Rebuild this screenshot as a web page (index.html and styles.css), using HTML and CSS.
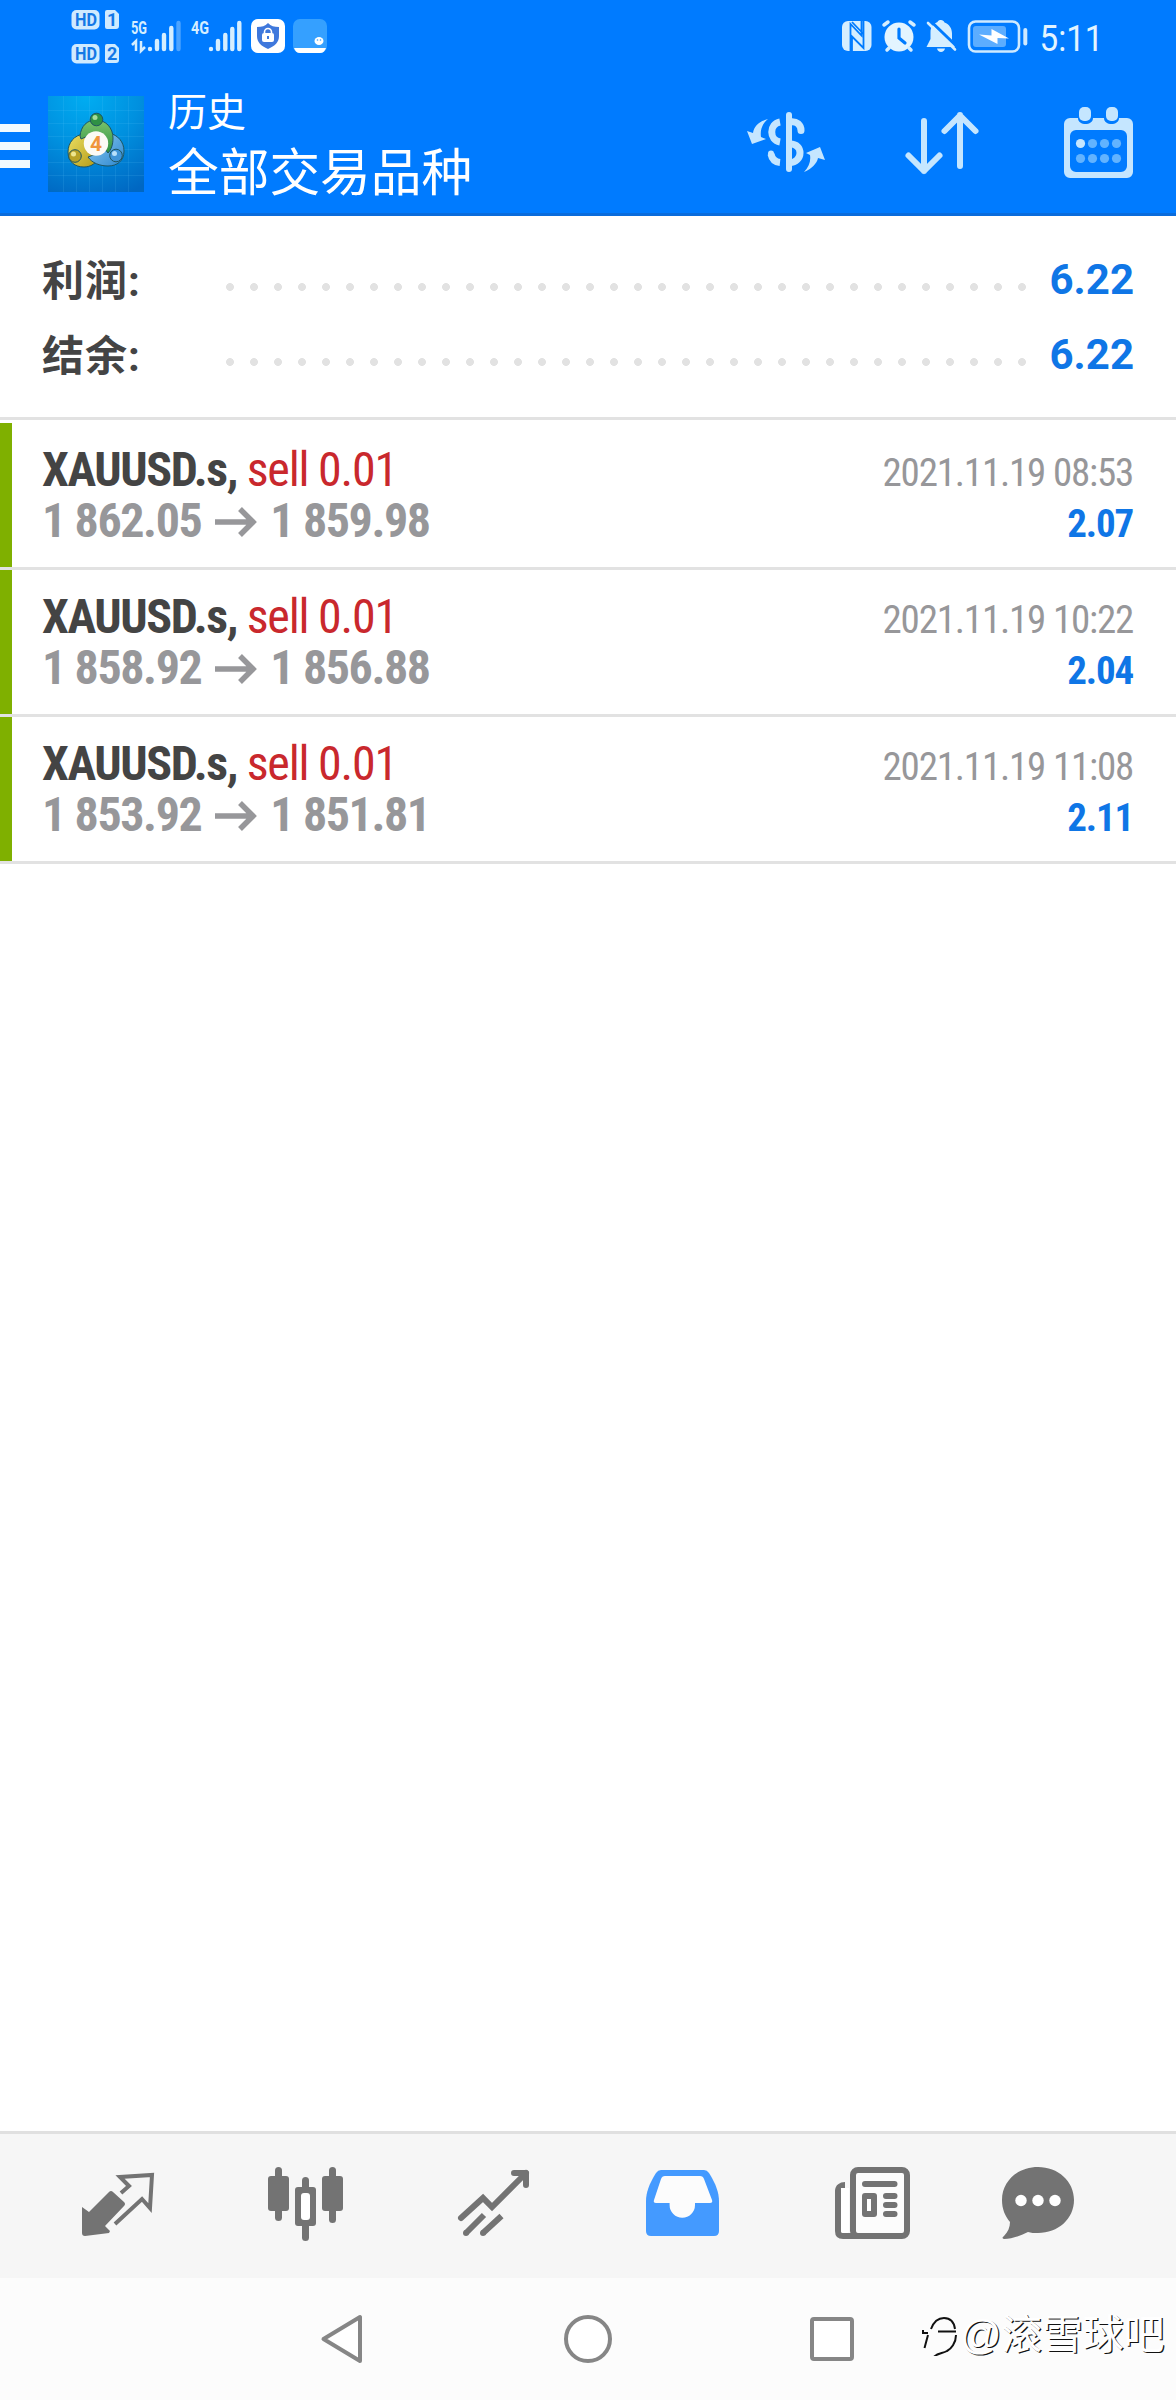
FILE: index.html
```html
<!DOCTYPE html>
<html lang="zh-CN">
<head>
<meta charset="utf-8">
<title>历史</title>
<link rel="stylesheet" href="styles.css">
</head>
<body>
<div class="screen">
  <header class="header">
    <div class="status">
      <svg class="status-left" viewBox="0 0 340 72" width="340" height="72">
        <g fill="#cfeaff">
          <rect x="71.500" y="10" width="28" height="19.500" rx="5"/>
          <rect x="71.500" y="44" width="28" height="19.500" rx="5"/>
          <path d="M107 10h8l4 4v12a3 3 0 0 1-3 3h-9a2 2 0 0 1-2-2V12a2 2 0 0 1 2-2zM107 44h8l4 4v12a3 3 0 0 1-3 3h-9a2 2 0 0 1-2-2V46a2 2 0 0 1 2-2z"/>
        </g>
        <g class="badge-text">
          <text x="75" y="26" textLength="22" lengthAdjust="spacingAndGlyphs">HD</text>
          <text x="75" y="60" textLength="22" lengthAdjust="spacingAndGlyphs">HD</text>
          <text x="107" y="26">1</text>
          <text x="107" y="60">2</text>
        </g>
        <g class="net-text">
          <text x="131" y="34" textLength="16" lengthAdjust="spacingAndGlyphs">5G</text>
          <text x="191" y="34" textLength="18" lengthAdjust="spacingAndGlyphs">4G</text>
        </g>
        <g stroke="#d5eeff" stroke-width="4.400" stroke-linecap="round">
          <path d="M150 49v0M157 41v8M164 35v14M171.300 28v21"/>
          <path d="M178.500 23v26" stroke="#4da4ff"/>
          <path d="M211 49v0M218 41v8M225.300 35v14M232.300 29v20M239.300 23v26"/>
        </g>
        <path d="M132 45l4-4v10M141 41v10l4-4" fill="none" stroke="#d5eeff" stroke-width="2.500"/>
        <rect x="251" y="19" width="34" height="34" rx="7" fill="#fff"/>
        <path d="M268 23c3 3 6 4 11 4v9c0 6-4 10-11 13-7-3-11-7-11-13v-9c5 0 8-1 11-4z" fill="#3f78dc"/>
        <rect x="262" y="33" width="12" height="9" rx="2" fill="#fff"/>
        <path d="M264.500 33v-1a3.500 3.500 0 0 1 7 0v1" fill="none" stroke="#fff" stroke-width="1.600"/>
        <path d="M268 36v3" stroke="#3f78dc" stroke-width="2"/>
        <rect x="293" y="19" width="34" height="34" rx="7" fill="#35a0ff"/>
        <path d="M294 48h32c-1 3-3 5-6 5h-20c-3 0-5-2-6-5z" fill="#fff"/>
        <ellipse cx="319" cy="41" rx="4.500" ry="4" fill="#fff"/>
        <circle cx="317.500" cy="40" r=".8" fill="#35a0ff"/><circle cx="320.500" cy="40" r=".8" fill="#35a0ff"/>
      </svg>
      <svg class="status-right" viewBox="836 0 340 72" width="340" height="72">
        <rect x="842" y="21" width="29.500" height="30" rx="6" fill="#d5eeff"/>
        <path d="M850.500 51V24l11 11.500V21M852 22l11.500 12M863.500 21v27L852 36.500V51" fill="none" stroke="#007bff" stroke-width="1.800"/>
        <circle cx="899" cy="37" r="14.500" fill="#e3f4ff"/>
        <path d="M884 25l4-3M914 25l-4-3M889 48l-2 2M909 48l2 2" stroke="#d5eeff" stroke-width="3.500" stroke-linecap="round"/>
        <path d="M899 29v9l6 5" fill="none" stroke="#007bff" stroke-width="3.200" stroke-linecap="round"/>
        <path d="M941 20c1.500 0 3 1 3.500 2.500 5 2 7.500 6 7.500 11V40l3 7h-28.500l4-8v-7c0-5 3-8.500 7-10 .5-1.500 2-2 3.500-2zM937 48.500h8c-.5 2-2 3.500-4 3.500s-3.500-1.500-4-3.500z" fill="#d5eeff"/>
        <path d="M930 20.500l28 27" stroke="#007bff" stroke-width="3"/>
        <path d="M928 23l27 26.500" stroke="#d5eeff" stroke-width="2.600" stroke-linecap="round"/>
        <rect x="969" y="21.500" width="50" height="30" rx="6.500" fill="none" stroke="#cfeaff" stroke-width="2.600"/>
        <rect x="973" y="26" width="33" height="21" rx="3" fill="#5cadff"/>
        <path d="M979 34.500l12.500 1V29l17.500 9.500-11.500-.5V44z" fill="#fff"/>
        <rect x="1023.300" y="28" width="4" height="17.500" rx="2" fill="#cfeaff"/>
        <text class="clock" x="1039.500" y="50.500" textLength="64" lengthAdjust="spacingAndGlyphs">5:11</text>
      </svg>
    </div>
    <div class="toolbar">
      <svg class="menu" viewBox="0 0 48 96" width="48" height="96"><path d="M0 28h30v8H0zM0 46h30v8H0zM0 64h30v8H0z" fill="#f2faff"/></svg>
      <svg class="logo" viewBox="0 0 96 96" width="96" height="96">
        <defs>
          <radialGradient id="sky" cx=".4" cy="0" r="1.100"><stop offset="0" stop-color="#00adf2"/><stop offset=".5" stop-color="#0090df"/><stop offset="1" stop-color="#0067c2"/></radialGradient>
          <linearGradient id="gn" x2="0" y2="1"><stop stop-color="#7cc46c"/><stop offset="1" stop-color="#2c9142"/></linearGradient>
          <linearGradient id="yl" x2="1" y2="1"><stop stop-color="#ece063"/><stop offset="1" stop-color="#b39a17"/></linearGradient>
          <linearGradient id="bl" x2="1" y2="1"><stop stop-color="#8fcdf3"/><stop offset="1" stop-color="#2b86cf"/></linearGradient>
        </defs>
        <rect width="96" height="96" fill="url(#sky)"/>
        <path d="M15.500 0v96M28.500 0v96M41.500 0v96M54.500 0v96M67.500 0v96M80.500 0v96M0 14.500h96M0 27.500h96M0 40.500h96M0 53.500h96M0 66.500h96M0 79.500h96" stroke="#6fd0ff" stroke-opacity=".13"/>
        <g stroke="#1f5560" stroke-width="1">
          <path d="M36 38c-10 1-16 9-16 18 0 10 7 15 16 15 6 0 11-3 13-7z" fill="url(#yl)"/>
          <path d="M61 37c9 2 15 9 15 18 0 10-7 15-16 15-8 0-16-3-20-9l14-5z" fill="url(#bl)"/>
          <path d="M48 24c10 0 17 8 17 18 0 7-2 12-5 15L45 38l-12 5-1-3c1-10 7-16 16-16z" fill="url(#gn)"/>
          <circle cx="48.500" cy="23.500" r="6.300" fill="#2f9145"/>
          <circle cx="27" cy="60" r="6.300" fill="#b8a227"/>
          <circle cx="68" cy="59.500" r="6.300" fill="#3f93d6"/>
        </g>
        <circle cx="47" cy="21.500" r="2.500" fill="#a6dc9a"/><circle cx="25.500" cy="58" r="2.500" fill="#eee68f"/><circle cx="66.500" cy="57.500" r="2.500" fill="#b9e0fa"/>
        <circle cx="48" cy="47.500" r="12.200" fill="#fbfaf5"/>
        <text class="logo-digit" x="48" y="55" text-anchor="middle">4</text>
      </svg>
      <div class="titles">
        <div class="title-small">历史</div>
        <div class="title-big">全部交易品种</div>
      </div>
      <svg class="actions" viewBox="726 96 450 96" width="450" height="96">
        <g fill="none" stroke="#c5e6ff" stroke-linecap="round" stroke-linejoin="round">
          <g stroke-width="6">
            <path d="M789 115v54"/>
            <path d="M790 122c7-1 11 3 11 8.500M790 144c7 0 10 4 10 9s-4 9.500-10 9.500" stroke-width="7"/>
            <path d="M780 122c-11 2-11 18 0 20M771 154c1 5 4 8 9 8.500" stroke-width="7" stroke-linecap="butt"/>
            <path d="M771 153.500v.5"/>
            <path d="M924 121v50M908.500 155.500L924 171l15.500-15.500M960 166v-51M944.500 131l15.500-15.500L975.500 131"/>
          </g>
        </g>
        <path d="M768 119c-8 2-14 7-15 14l-6-2 5 13 14-5-5-2c-1-7 1-13 7-18zM804 172c8-3 13-9 14-14l7 2-5-13-14 6 4 2c1 6-1 12-6 17z" fill="#c5e6ff"/>
        <path d="M1070 118h8c0 8 15 8 15 0h11c0 8 15 8 15 0h8a6 6 0 0 1 6 6v48a6 6 0 0 1-6 6h-57a6 6 0 0 1-6-6v-48a6 6 0 0 1 6-6zm6 12a6 6 0 0 0-6 6v30a6 6 0 0 0 6 6h45a6 6 0 0 0 6-6v-30a6 6 0 0 0-6-6z" fill="#c5e6ff" fill-rule="evenodd"/>
        <rect x="1079" y="107" width="12" height="14" rx="5" fill="#c5e6ff"/><rect x="1106" y="107" width="12" height="14" rx="5" fill="#c5e6ff"/>
        <circle cx="1080.500" cy="143.500" r="4.600" fill="#c5e6ff"/>
        <g fill="#62b3ff"><circle cx="1092.500" cy="143.500" r="4.600"/><circle cx="1104.500" cy="143.500" r="4.600"/><circle cx="1116.500" cy="143.500" r="4.600"/><circle cx="1080.500" cy="158.500" r="4.600"/><circle cx="1092.500" cy="158.500" r="4.600"/><circle cx="1104.500" cy="158.500" r="4.600"/><circle cx="1116.500" cy="158.500" r="4.600"/></g>
      </svg>
    </div>
  </header>

  <section class="summary">
    <div class="sum-row"><span class="sum-label">利润:</span><span class="dots"></span><span class="sum-value">6.22</span></div>
    <div class="sum-row"><span class="sum-label">结余:</span><span class="dots"></span><span class="sum-value">6.22</span></div>
  </section>

  <main class="deals">
    <article class="deal">
      <div class="line"><span class="symbol">XAUUSD.s, <span class="side">sell 0.01</span></span><span class="time">2021.11.19 08:53</span></div>
      <div class="line"><span class="prices">1 862.05<svg class="arrow" viewBox="0 0 42 30" width="42" height="30"><path d="M0 15h37M25 2l13 13-13 13"/></svg>1 859.98</span><span class="profit">2.07</span></div>
    </article>
    <article class="deal">
      <div class="line"><span class="symbol">XAUUSD.s, <span class="side">sell 0.01</span></span><span class="time">2021.11.19 10:22</span></div>
      <div class="line"><span class="prices">1 858.92<svg class="arrow" viewBox="0 0 42 30" width="42" height="30"><path d="M0 15h37M25 2l13 13-13 13"/></svg>1 856.88</span><span class="profit">2.04</span></div>
    </article>
    <article class="deal">
      <div class="line"><span class="symbol">XAUUSD.s, <span class="side">sell 0.01</span></span><span class="time">2021.11.19 11:08</span></div>
      <div class="line"><span class="prices">1 853.92<svg class="arrow" viewBox="0 0 42 30" width="42" height="30"><path d="M0 15h37M25 2l13 13-13 13"/></svg>1 851.81</span><span class="profit">2.11</span></div>
    </article>
  </main>

  <nav class="tabs">
    <svg viewBox="24 2134 188 144" width="188" height="144">
      <path d="M82 2207l7 5 20-20q2-2 4 0l11 10q2 2 0 4l-19 20 5 5-1 2-24 3q-3 0-3-3z" fill="#737373"/>
      <path d="M121 2193l8-7-9-9 32-2-2 33-8-9-27 25" fill="none" stroke="#737373" stroke-width="4"/>
    </svg>
    <svg viewBox="212 2134 188 144" width="188" height="144">
      <g fill="#737373"><rect x="268" y="2176" width="21" height="35" rx="3"/><rect x="275" y="2167" width="7" height="54" rx="3.500"/><rect x="322" y="2176" width="21" height="35" rx="3"/><rect x="329" y="2167" width="7" height="56" rx="3.500"/><rect x="302" y="2177" width="7" height="64" rx="3.500"/><rect x="295" y="2187" width="21" height="39" rx="3"/></g>
      <rect x="301" y="2193" width="9" height="27" rx="3" fill="#fff"/>
    </svg>
    <svg viewBox="400 2134 188 144" width="188" height="144">
      <g fill="none" stroke="#737373" stroke-width="6"><path d="M461 2218l22-20 9 9 34-34" stroke-linecap="round"/><path d="M514 2173h12v12" stroke-linecap="round" stroke-linejoin="round"/><path d="M466 2233l18-18M483 2233l18.500-17"/></g>
      <g fill="#737373"><circle cx="466" cy="2233" r="3"/><circle cx="483" cy="2233" r="3"/></g>
    </svg>
    <svg viewBox="588 2134 188 144" width="188" height="144">
      <path d="M661 2170h43q3 0 5 3c7 11 10 20 10 28v30q0 5-5 5h-63q-5 0-5-5v-30c0-8 3-17 10-28q2-3 5-3z" fill="#449aff"/>
      <path d="M665 2176h35q3 0 4 3l8 21q1 3-2 3h-15v2a12.700 12.700 0 0 1-25.400 0v-2H656q-3 0-2-3l7-21q1-3 4-3z" fill="#fcfcfc"/>
    </svg>
    <svg viewBox="776 2134 188 144" width="188" height="144">
      <rect x="853" y="2170" width="54" height="66" rx="5" fill="#fcfcfc" stroke="#737373" stroke-width="6"/>
      <path d="M845 2185c-4 0-7 2-7 6v40q0 5 5 5h20" fill="none" stroke="#737373" stroke-width="6"/>
      <path d="M841 2188h8v43q0 2-2 2h-4q-2 0-2-2z" fill="#fff"/>
      <path d="M865 2184h29.500M886 2196h8.500M886 2205h8.500M886 2214h8.500" stroke="#737373" stroke-width="6" stroke-linecap="round"/>
      <rect x="862" y="2193" width="15" height="24" rx="3" fill="#737373"/><rect x="867" y="2199" width="4" height="12" fill="#fff"/>
    </svg>
    <svg viewBox="964 2134 188 144" width="188" height="144">
      <path d="M1038 2167c20 0 36 14 36 33s-16 33-36 33c-4 0-7 0-10-1-8 4-16 7-24 7q-3-1 0-3c4-4 6-9 6-14-5-6-8-13-8-22 0-19 16-33 36-33z" fill="#737373"/>
      <g fill="#fff"><circle cx="1021" cy="2200.500" r="5.700"/><circle cx="1038" cy="2200.500" r="5.700"/><circle cx="1055" cy="2200.500" r="5.700"/></g>
    </svg>
  </nav>

  <footer class="system-nav">
    <svg viewBox="280 2278 632 122" width="632" height="122">
      <g fill="#fff" stroke="#868686" stroke-width="4" stroke-linejoin="round">
        <path d="M323.500 2339l36.500-22v44z"/>
        <circle cx="588" cy="2339" r="22"/>
        <rect x="812" y="2319" width="40" height="40" rx="2"/>
      </g>
    </svg>
    <div class="watermark">
      <svg viewBox="920 2306 40 50" width="40" height="50"><path d="M931 2329c3-8 8-11 13-11 6 0 10 4 11 11M922 2333h6M923 2333v-3M938 2331.500h18M956 2335c0 8-5 14-9 16-5 3-10 1-15 8M928 2335l-3.500 13" class="mark"/></svg>
      <span>@滚雪球吧</span>
    </div>
  </footer>
</div>
</body>
</html>
```
FILE: styles.css
```css
body {
  margin: 0;
  background: #fff;
  font-family: Roboto, "Noto Sans CJK SC", sans-serif;
}

svg {
  display: block;
  flex: none;
}

.screen {
  width: 1176px;
  height: 2400px;
  display: flex;
  flex-direction: column;
  overflow: hidden;
}

.header {
  height: 216px;
  box-sizing: border-box;
  background: #007bff;
  border-bottom: 3px solid #0a6cdc;
  color: #fff;
}

.status {
  display: flex;
  justify-content: space-between;
  height: 72px;
}

.badge-text {
  font: 700 18px Roboto, sans-serif;
  fill: #1478e6;
}

.net-text {
  font: 700 19px Roboto, sans-serif;
  fill: #d5eeff;
}

.clock {
  font: 400 36px Roboto, sans-serif;
  fill: #e3f4ff;
}

.toolbar {
  display: flex;
  padding-top: 24px;
}

.logo-digit {
  font: 700 21px Roboto, sans-serif;
  fill: #f0953c;
}

.titles {
  flex: 1;
  padding-left: 24px;
  margin-top: -16px;
  font-family: "Noto Sans CJK SC", sans-serif;
  white-space: nowrap;
}

.title-small {
  font-size: 39px;
  line-height: 58px;
}

.title-big {
  font-size: 50.700px;
  line-height: 62px;
}

.summary {
  height: 204px;
  box-sizing: border-box;
  padding: 26px 42px 0;
  border-bottom: 3px solid #e2e2e2;
}

.sum-row {
  display: flex;
  align-items: center;
  height: 75px;
  font-size: 42px;
  font-weight: 700;
}

.sum-label {
  width: 182px;
  margin-top: -4px;
  letter-spacing: 1px;
  color: #444;
}

.dots {
  width: 804px;
  height: 8px;
  margin-top: 15px;
  background: radial-gradient(circle at 6px 4px, #e2e2e2 3.600px, transparent 4.200px) 0 0 / 24px 8px repeat-x;
}

.sum-value {
  margin-left: auto;
  color: #0f76e6;
}

.deals {
  flex: 1;
  padding-top: 3px;
}

.deal {
  height: 147px;
  box-sizing: border-box;
  padding: 21px 42px 0 42px;
  background: linear-gradient(#7fb000, #7fb000) 0 0 / 12px 144px no-repeat;
  border-bottom: 3px solid #e2e2e2;
  font-stretch: 75%;
}

.line {
  display: flex;
  justify-content: space-between;
  align-items: baseline;
  height: 51px;
  line-height: 51px;
  white-space: nowrap;
}

.symbol {
  font-size: 48px;
  font-weight: 700;
  letter-spacing: -1.400px;
  color: #444;
}

.side {
  font-weight: 400;
  letter-spacing: -1.200px;
  color: #c9282d;
}

.time {
  margin-right: 1px;
  font-size: 39px;
  letter-spacing: -1.200px;
  color: #97979a;
}

.prices {
  font-size: 48px;
  font-weight: 700;
  letter-spacing: -1.400px;
  color: #97979a;
}

.arrow {
  display: inline-block;
  margin: 0 13px 0 14px;
  fill: none;
  stroke: #97979a;
  stroke-width: 5.500px;
}

.profit {
  margin-right: 1px;
  font-size: 39px;
  font-weight: 700;
  letter-spacing: -1.200px;
  color: #0f76e6;
}

.tabs {
  display: flex;
  height: 144px;
  padding-left: 24px;
  border-top: 3px solid #e0e0e0;
  background: #f6f6f6;
}

.system-nav {
  display: flex;
  height: 122px;
  padding-left: 280px;
  background: #fcfcfc;
}

.watermark {
  display: flex;
  align-items: center;
  height: 50px;
  margin: 28px 0 0 8px;
  font-family: "Liberation Sans", "Noto Sans CJK SC", sans-serif;
  font-size: 41px;
  letter-spacing: -.3px;
  color: #fff;
  text-shadow: 1.300px .8px 0 #111;
  white-space: nowrap;
}

.mark {
  fill: none;
  stroke: #111;
  stroke-width: 2px;
}
```
